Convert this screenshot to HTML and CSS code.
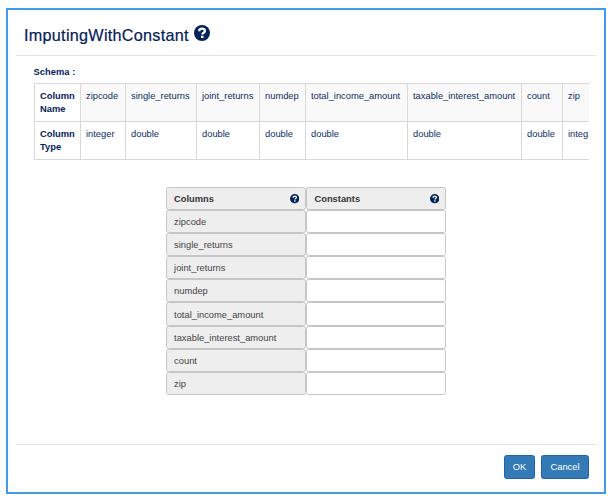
FILE: index.html
```html
<!DOCTYPE html>
<html lang="en">
<head>
<meta charset="utf-8">
<title>ImputingWithConstant</title>
<link rel="stylesheet" href="styles.css">
</head>
<body>
<svg width="0" height="0" class="defs" aria-hidden="true">
  <symbol id="help" viewBox="0 0 16 16">
    <circle cx="8" cy="8" r="8" fill="#03215a"/>
    <path d="M5.2 6.2C5.2 4.4 6.4 3.6 8.1 3.6S10.9 4.5 10.9 6C10.9 7.8 8.3 7.6 8.3 9.5" fill="none" stroke="#fff" stroke-width="2.3"/>
    <rect x="7" y="10.7" width="2.5" height="2.3" fill="#fff"/>
  </symbol>
</svg>
<main class="dialog">
  <header class="header">
    <h1>ImputingWithConstant</h1>
    <svg class="help-large"><use href="#help"/></svg>
  </header>
  <section class="body">
    <h2>Schema :</h2>
    <div class="schema-scroll">
      <table class="schema">
        <colgroup><col class="w-head"><col class="w-zipcode"><col class="w-single"><col class="w-joint"><col class="w-numdep"><col class="w-income"><col class="w-interest"><col class="w-count"><col class="w-zip"></colgroup>
        <tr class="names"><th>Column Name</th><td>zipcode</td><td>single_returns</td><td>joint_returns</td><td>numdep</td><td>total_income_amount</td><td>taxable_interest_amount</td><td>count</td><td>zip</td></tr>
        <tr><th>Column Type</th><td>integer</td><td>double</td><td>double</td><td>double</td><td>double</td><td>double</td><td>double</td><td>integ</td></tr>
      </table>
    </div>
    <div class="grid">
      <div class="cell head"><span>Columns</span><svg class="help-small"><use href="#help"/></svg></div>
      <div class="cell head"><span>Constants</span><svg class="help-small"><use href="#help"/></svg></div>
      <div class="cell label">zipcode</div><div class="cell"></div>
      <div class="cell label">single_returns</div><div class="cell"></div>
      <div class="cell label">joint_returns</div><div class="cell"></div>
      <div class="cell label">numdep</div><div class="cell"></div>
      <div class="cell label">total_income_amount</div><div class="cell"></div>
      <div class="cell label">taxable_interest_amount</div><div class="cell"></div>
      <div class="cell label">count</div><div class="cell"></div>
      <div class="cell label">zip</div><div class="cell"></div>
    </div>
  </section>
  <footer class="footer">
    <button class="ok">OK</button>
    <button class="cancel">Cancel</button>
  </footer>
</main>
</body>
</html>
```
FILE: styles.css
```css
* { box-sizing: border-box; }
body { margin: 0; background: #fff; font-family: "Liberation Sans", Arial, sans-serif; font-size: 9.33px; color: #03215a; }
.defs { display: block; }
.dialog { width: 600px; height: 486px; margin: 8px 0 0 6px; border: 2px solid #429be8; padding: 0 8px; display: flex; flex-direction: column; }
.header { height: 46px; flex: none; border-bottom: 1px solid #e2e2e2; display: flex; align-items: flex-start; padding: 15px 0 0 8px; }
h1 { margin: 0; font-size: 16.2px; letter-spacing: .28px; line-height: 20px; font-weight: 400; width: 165px; margin-right: 5px; -webkit-text-stroke: .2px #03215a; }
.help-large { width: 16px; height: 16px; margin-top: 0; }
.body { flex: 1; padding: 10px 7px 0 18px; }
h2 { margin: 0 0 0 -.5px; font-size: 9.33px; line-height: 13px; letter-spacing: .04px; }
.schema-scroll { overflow: hidden; margin-top: 4px; width: 555px; }
.schema { width: 572px; table-layout: fixed; border-collapse: collapse; line-height: 13px; }
.schema th, .schema td { height: 38px; border: 1px solid #d9d9d9; padding: 6px 0 0 5px; vertical-align: top; text-align: left; white-space: nowrap; }
.schema td { color: #0c2f63; }
.schema th { white-space: normal; }
.schema .names td { background: #f9f9f9; }
.w-head { width: 46px; }
.w-zipcode { width: 45px; }
.w-single { width: 71px; }
.w-joint { width: 63px; }
.w-numdep { width: 46px; }
.w-income { width: 102px; }
.w-interest { width: 114px; }
.w-count { width: 41px; }
.w-zip { width: 44px; }
.grid { display: grid; grid-template-columns: 140.4px 140.4px; grid-auto-rows: 23.1px; margin: 27px 0 0 131.6px; color: #444; }
.cell { border: 1px solid #c6c6c6; border-radius: 2.5px; padding: 1px 6px 0 7.5px; display: flex; align-items: center; justify-content: space-between; background: #fff; }
.label, .head { background: #eee; }
.head { font-weight: 700; color: #333; }
.help-small { width: 9.4px; height: 9.4px; }
.footer { height: 48px; flex: none; border-top: 1px solid #e2e2e2; display: flex; justify-content: flex-end; gap: 6px; padding: 10px 7px 0 0; }
button { height: 24px; padding: 0; border: 1px solid #1f65a6; border-radius: 2.5px; background: #337ab7; color: #fff; font: 9.33px "Liberation Sans", Arial, sans-serif; }
.ok { width: 31px; }
.cancel { width: 48px; }
```
